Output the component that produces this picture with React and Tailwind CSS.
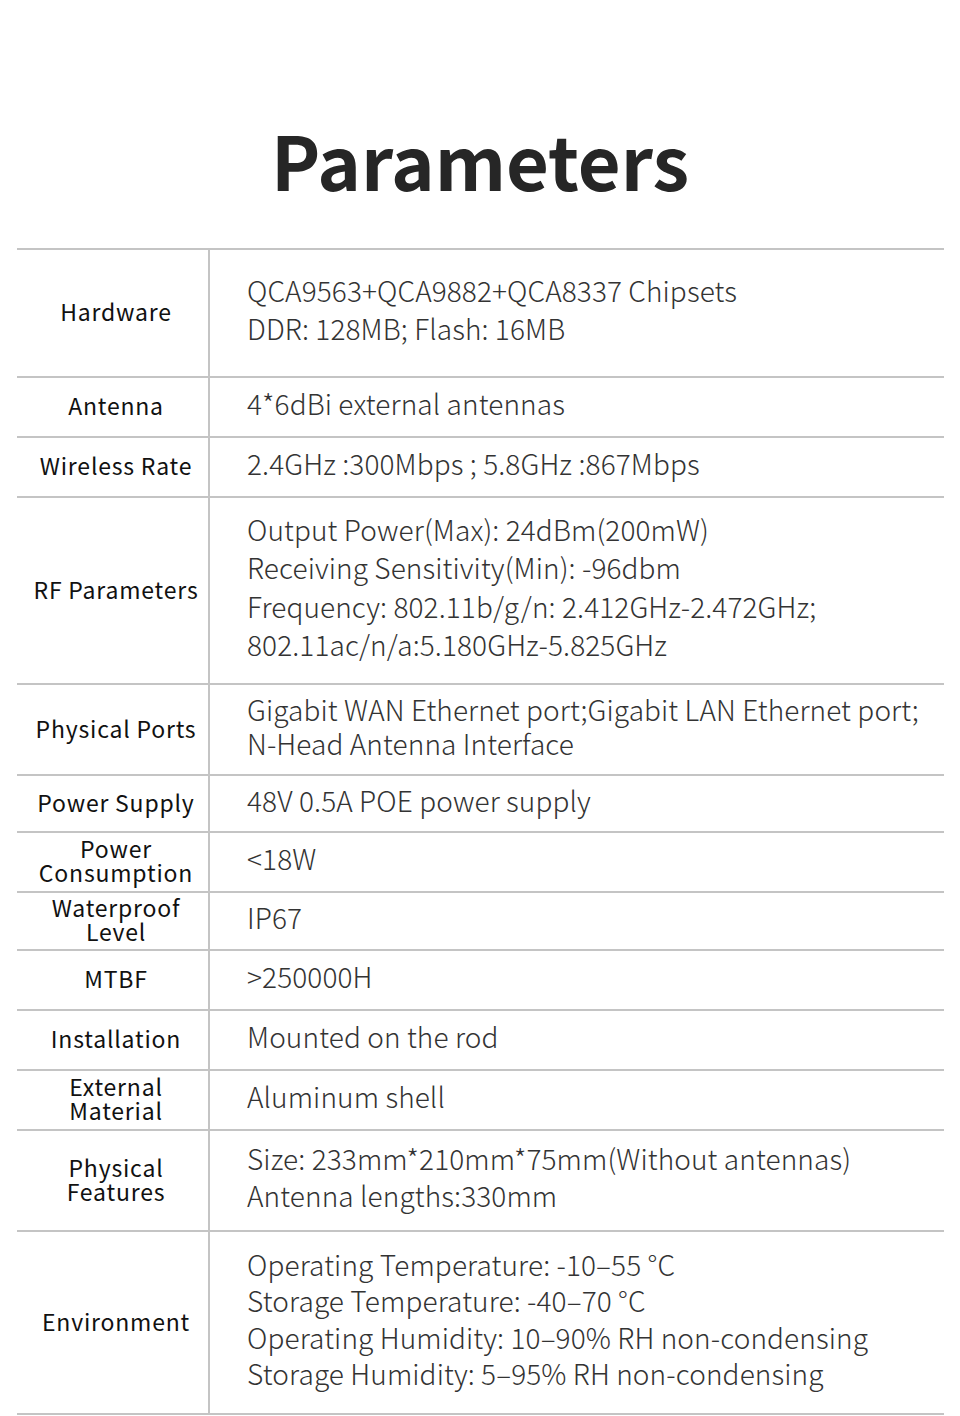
import React from "react";

const rows = [
  { label: ["Hardware"], h: "h-[128px]", lh: "leading-[38px]", value: ["QCA9563+QCA9882+QCA8337 Chipsets", "DDR: 128MB; Flash: 16MB"] },
  { label: ["Antenna"], h: "h-[60px]", value: ["4*6dBi external antennas"] },
  { label: ["Wireless Rate"], h: "h-[60px]", value: ["2.4GHz :300Mbps ; 5.8GHz :867Mbps"] },
  {
    label: ["RF Parameters"],
    h: "h-[187px]",
    lh: "leading-[38.5px]",
    value: [
      "Output Power(Max): 24dBm(200mW)",
      "Receiving Sensitivity(Min): -96dbm",
      "Frequency: 802.11b/g/n: 2.412GHz-2.472GHz;",
      "802.11ac/n/a:5.180GHz-5.825GHz",
    ],
  },
  { label: ["Physical Ports"], h: "h-[91px]", lh: "leading-[34px]", value: ["Gigabit WAN Ethernet port;Gigabit LAN Ethernet port;", "N-Head Antenna Interface"] },
  { label: ["Power Supply"], h: "h-[57px]", value: ["48V 0.5A POE power supply"] },
  { label: ["Power", "Consumption"], h: "h-[60px]", value: ["<18W"] },
  { label: ["Waterproof", "Level"], h: "h-[58px]", value: ["IP67"] },
  { label: ["MTBF"], h: "h-[60px]", value: [">250000H"] },
  { label: ["Installation"], h: "h-[60px]", value: ["Mounted on the rod"] },
  { label: ["External", "Material"], h: "h-[60px]", value: ["Aluminum shell"] },
  { label: ["Physical", "Features"], h: "h-[101px]", lh: "leading-[37px]", value: ["Size: 233mm*210mm*75mm(Without antennas)", "Antenna lengths:330mm"] },
  {
    label: ["Environment"],
    h: "h-[183px]",
    lh: "leading-[36.5px]",
    value: [
      "Operating Temperature: -10–55 °C",
      "Storage Temperature: -40–70 °C",
      "Operating Humidity: 10–90% RH non-condensing",
      "Storage Humidity: 5–95% RH non-condensing",
    ],
  },
];

export default function App() {
  return (
    <div className="w-[960px] h-[1416px] bg-white font-['Noto_Sans_CJK_SC','Noto_Sans',sans-serif] overflow-hidden">
      <h1 className="pt-[122px] pb-[52px] text-center text-[74px] leading-[74px] font-bold text-[#262626]">
        Parameters
      </h1>

      <div className="mx-[17px] w-[927px] border-b-2 border-[#c4c4c4]">
        {rows.map((row, i) => (
          <div key={i} className={`flex ${row.h} border-t-2 border-[#c4c4c4]`}>
            <div className="w-[193px] shrink-0 border-r-2 border-[#c4c4c4] pl-[7px] pb-[4px] flex flex-col items-center justify-center text-[23px] leading-[24px] tracking-[0.8px] text-[#111] text-center">
              {row.label.map((l, j) => (
                <span key={j}>{l}</span>
              ))}
            </div>
            <div className={`flex-1 pl-[37px] pb-[8px] flex flex-col justify-center text-[28px] font-light text-[#333] tracking-[0.1px] ${row.lh || "leading-[36px]"}`}>
              {row.value.map((v, j) => (
                <span key={j} className="whitespace-nowrap">{v}</span>
              ))}
            </div>
          </div>
        ))}
      </div>
    </div>
  );
}
